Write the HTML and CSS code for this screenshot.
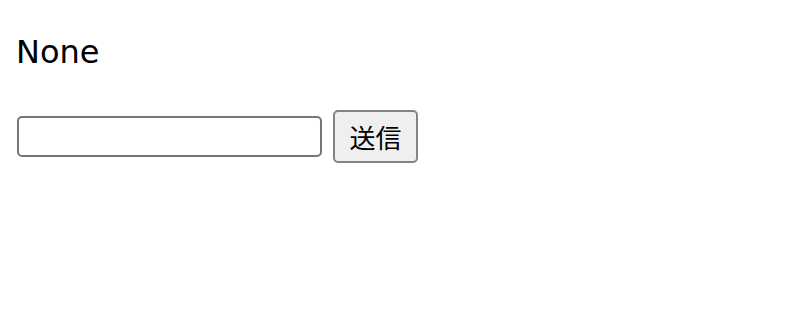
FILE: index.html
```html
<!DOCTYPE html>
<html lang="ja">
<head>
	<meta charset="UTF-8">
	<title>送信フォーム</title>
	<link rel="stylesheet" href="styles.css">
</head>
<body>
	<p class="result">None</p>
	<form class="form" action="#">
		<input class="field" type="text" name="message">
		<button class="send" type="submit">送信</button>
	</form>
</body>
</html>
```
FILE: styles.css
```css
body {
	margin: 0;
	padding: 16px;
	font-family: "Liberation Sans", "Noto Sans CJK JP", sans-serif;
	color: #000;
	background: #fff;
}
.result {
	margin: 18px 0 39px;
	font-family: "DejaVu Sans", "Noto Sans CJK JP", sans-serif;
	font-size: 32px;
	line-height: 37px;
}
.form {
	display: flex;
	align-items: center;
	gap: 11px;
	margin: 0;
	padding-left: 1px;
}
.field {
	box-sizing: border-box;
	width: 305px;
	height: 41px;
	margin: 0;
	padding: 2px 6px;
	border: 2px solid #767676;
	border-radius: 5px;
	background: #fff;
	font-size: 24px;
}
.send {
	box-sizing: border-box;
	width: 85px;
	height: 53px;
	margin: 0;
	padding: 0;
	border: 2px solid #858585;
	border-radius: 5px;
	background: #efefef;
	color: #000;
	font-family: "Noto Sans CJK JP", sans-serif;
	font-size: 26px;
}
```
